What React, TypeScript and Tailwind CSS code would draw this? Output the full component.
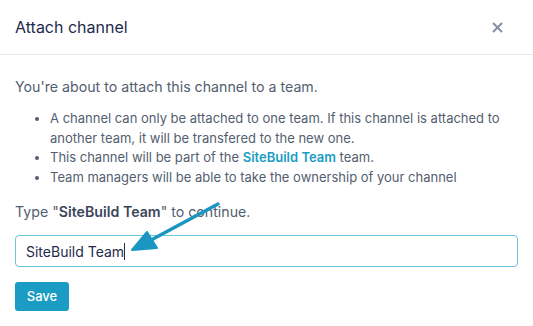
const bullets = [
  'A channel can only be attached to one team. If this channel is attached to another team, it will be transfered to the new one.',
];

export default function App() {
  return (
    <div className="relative w-[533px] h-[326px] bg-white font-['Inter',sans-serif] overflow-hidden">
      {/* header */}
      <div className="h-[55px] flex items-center justify-between pl-[15px] pr-[30px] border-b border-[#e5e7eb]">
        <h1 className="text-[16px] text-[#1e2b4a]">Attach channel</h1>
        <svg width="11" height="11" viewBox="0 0 11 11" className="text-[#8790a3]">
          <path d="M1 1L10 10M10 1L1 10" stroke="currentColor" strokeWidth="2" />
        </svg>
      </div>

      {/* body */}
      <div className="px-[15px] pt-[22px]">
        <p className="text-[14.2px] leading-[20px] text-[#535e70]">
          You're about to attach this channel to a team.
        </p>
        <ul className="mt-[12px] pl-[35px] list-disc text-[13px] leading-[19.5px] text-[#535e70] marker:text-[#535e70]">
          {bullets.map((b) => (
            <li key={b}>{b}</li>
          ))}
          <li>
            This channel will be part of the{' '}
            <span className="font-semibold text-[#1a9cc4]">SiteBuild Team</span> team.
          </li>
          <li>Team managers will be able to take the ownership of your channel</li>
        </ul>
        <p className="mt-[15px] text-[14.2px] leading-[20px] text-[#535e70]">
          Type "<span className="font-semibold text-[#3b4558]">SiteBuild Team</span>" to continue.
        </p>
        <div className="mt-[13px] h-[32px] flex items-center rounded-[4px] border border-[#6cc4dc] px-[10px] text-[14px] text-[#1e2b4a]">
          SiteBuild Team
          <span className="w-px h-[17px] bg-[#1e2b4a]" />
        </div>
        <button className="mt-[15px] h-[29px] w-[54px] rounded-[3px] bg-[#1a9cc4] text-[13px] font-medium text-white">
          Save
        </button>
      </div>

      {/* annotation arrow */}
      <svg className="absolute left-0 top-0 pointer-events-none" width="533" height="326">
        <path d="M218 204L140 246" stroke="#1a96c0" strokeWidth="3.5" strokeLinecap="round" />
        <path d="M132 250L147 232L157 248Z" fill="#1a96c0" stroke="#1a96c0" strokeWidth="2" strokeLinejoin="round" />
      </svg>
    </div>
  );
}
